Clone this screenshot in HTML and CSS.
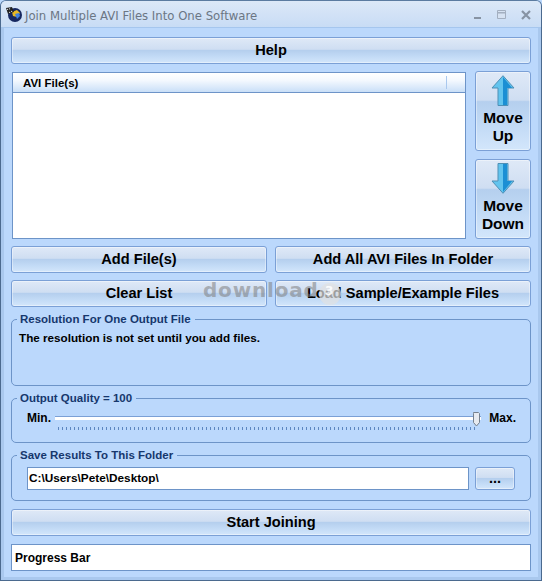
FILE: index.html
```html
<!DOCTYPE html>
<html lang="en">
<head>
    <meta charset="UTF-8">
    <meta name="viewport" content="width=device-width, initial-scale=1.0">
    <title>Join Multiple AVI Files Into One Software</title>
    <link rel="stylesheet" href="styles.css">
</head>
<body>
    <div id="window">
        <div id="titlebar">
            <svg class="app-icon" width="18" height="18" viewBox="0 0 18 18">
                <circle cx="10" cy="10" r="7" fill="#16275f"/>
                <path d="M7 7l5-2 3 3-3 4-4-1z" fill="#e8b923"/>
                <path d="M10 9l4-1 1 3-3 3z" fill="#3f7fe0"/>
                <path d="M1 3l6-1 2 5-6 2z" fill="#222"/>
                <path d="M2 4l1-.2.2 1-1 .2zM4 3.500l1-.2.2 1-1 .2zM4 7l1-.3.3 1-1 .3zM6 6l1-.3.3 1-1 .3z" fill="#eee"/>
            </svg>
            <span class="title-text">Join Multiple AVI Files Into One Software</span>
            <div class="window-controls">
                <svg width="10" height="10" viewBox="0 0 10 10"><path d="M1 7h7v2H1z" fill="#8793a3"/></svg>
                <svg width="10" height="10" viewBox="0 0 10 10"><path d="M.5.5h8v8h-8z" fill="#d6e2f2" stroke="#a3afc0"/><path d="M1 2h7v1.5H1z" fill="#a3afc0"/></svg>
                <svg width="11" height="10" viewBox="0 0 11 10"><path d="M1 1l8 8M9 1L1 9" stroke="#8793a3" stroke-width="2.2" fill="none"/></svg>
            </div>
        </div>

        <div id="content">
            <button class="btn btn-wide">Help</button>

            <div class="list-row">
                <div class="file-list">
                    <div class="list-header"><span>AVI File(s)</span></div>
                </div>
                <div class="move-buttons">
                    <button class="btn btn-move">
                        <svg width="24" height="32" viewBox="0 0 24 32">
                            <path d="M12 .7L23 13h-6v17.500H7V13H1z" fill="#62c4ee" stroke="#4f8fb5"/>
                            <path d="M12 2l9 11h-5v17h-4z" fill="#1b8fd4"/>
                        </svg>
                        <span>Move<br>Up</span>
                    </button>
                    <button class="btn btn-move">
                        <svg width="24" height="32" viewBox="0 0 24 32">
                            <path d="M12 30.300L23 18h-6V.5H7V18H1z" fill="#62c4ee" stroke="#4f8fb5"/>
                            <path d="M12 29l9-11h-5V1h-4z" fill="#1b8fd4"/>
                        </svg>
                        <span>Move<br>Down</span>
                    </button>
                </div>
            </div>

            <div class="button-grid">
                <button class="btn">Add File(s)</button>
                <button class="btn">Add All AVI Files In Folder</button>
                <button class="btn">Clear List</button>
                <button class="btn">Load Sample/Example Files</button>
            </div>

            <fieldset class="group group-resolution">
                <legend>Resolution For One Output File</legend>
                <p class="note">The resolution is not set until you add files.</p>
            </fieldset>

            <fieldset class="group group-quality">
                <legend>Output Quality = 100</legend>
                <div class="slider-row">
                    <span>Min.</span>
                    <div class="slider">
                        <div class="slider-track"></div>
                        <div class="slider-ticks"></div>
                        <svg class="slider-thumb" width="9" height="15" viewBox="0 0 9 15">
                            <path d="M1.5.5h5l1 1v9l-3 3.500-3-3.500v-9z" fill="#e6eaf0" stroke="#75808e"/>
                        </svg>
                    </div>
                    <span>Max.</span>
                </div>
            </fieldset>

            <fieldset class="group group-save">
                <legend>Save Results To This Folder</legend>
                <div class="folder-row">
                    <div class="text-box">C:\Users\Pete\Desktop\</div>
                    <button class="btn btn-browse">...</button>
                </div>
            </fieldset>

            <button class="btn btn-wide btn-start">Start Joining</button>
            <div class="progress-bar">Progress Bar</div>
        </div>

        <div class="watermark">download<span class="watermark-badge">3</span></div>
    </div>
</body>
</html>
```

FILE: styles.css
```css
html, body {
    margin: 0;
    height: 100%;
}
body {
    font-family: "Liberation Sans", Arial, sans-serif;
    background: #bbd8fc;
    overflow: hidden;
}
#window {
    position: relative;
    width: 542px;
    height: 581px;
    box-sizing: border-box;
    background: #bbd8fc;
    border: 1px solid #4b6a8f;
    border-top-color: #5b7ba0;
    border-radius: 6px 6px 0 0;
    box-shadow: inset 3px 0 0 #a9c8ee, inset -3px 0 0 #a9c8ee, inset 0 -3px 0 #a9c8ee;
}
#titlebar {
    display: flex;
    align-items: center;
    height: 26px;
    padding: 0 9px 0 4px;
    background: linear-gradient(#dce8f7, #c8dcf5);
    border-bottom: 1px solid #a5c6ee;
    border-radius: 5px 5px 0 0;
}
.app-icon {
    flex: none;
    margin-right: 2px;
}
.title-text {
    font-family: "DejaVu Sans", sans-serif;
    font-size: 11.7px;
    color: #6b7684;
    padding-top: 3px;
}
.window-controls {
    display: flex;
    gap: 14px;
    margin-left: auto;
    align-items: center;
    padding-top: 2px;
}
#content {
    padding: 9px 10px 0;
}
.btn {
    display: block;
    box-sizing: border-box;
    height: 27px;
    padding: 0 0 2px;
    border: 1px solid #7ba0d6;
    border-radius: 3px;
    background: linear-gradient(#dfe9f7 0%, #cfdef2 45%, #b5cfee 50%, #c3dbf6 75%, #d3e6fb 100%);
    box-shadow: inset 0 0 0 1px rgba(255, 255, 255, 0.4);
    font-family: "Liberation Sans", Arial, sans-serif;
    font-size: 14.6px;
    font-weight: bold;
    color: #000;
}
.btn-wide {
    width: 520px;
}
.list-row {
    display: flex;
    justify-content: space-between;
    margin-top: 7px;
}
.file-list {
    box-sizing: border-box;
    width: 454px;
    height: 167px;
    margin: 1px 0 0 1px;
    background: #fff;
    border: 1px solid #6d94c8;
}
.list-header {
    height: 20px;
    box-sizing: border-box;
    padding: 4px 0 0 10px;
    border-bottom: 1px solid #6d94c8;
    background: linear-gradient(#fff, #f3f8fe 40%, #c9dff8);
    font-size: 11.5px;
    font-weight: bold;
    position: relative;
}
.list-header::after {
    content: "";
    position: absolute;
    right: 18px;
    top: 3px;
    height: 13px;
    border-left: 1px solid #a9c8ee;
}
.move-buttons {
    display: flex;
    flex-direction: column;
    gap: 8px;
}
.btn-move {
    display: flex;
    flex-direction: column;
    align-items: center;
    width: 56px;
    height: 80px;
    padding: 3px 0 0;
    font-size: 15.5px;
    line-height: 18px;
    background: linear-gradient(#dfe9f7 0%, #cfdef2 36%, #b5cfee 38%, #c3dbf6 70%, #d3e6fb 100%);
}
.btn-move span {
    margin-top: 2px;
}
.button-grid {
    display: grid;
    grid-template-columns: 256px 256px;
    gap: 7px 8px;
    margin-top: 7px;
}
.group {
    margin: 0;
    padding: 0 7px;
    border: 1px solid #6d94c8;
    border-radius: 5px;
    min-width: 0;
    box-sizing: border-box;
}
.group legend {
    padding: 0 4px 0 3px;
    margin-left: -2px;
    font-size: 11.5px;
    font-weight: bold;
    color: #16376d;
    line-height: 14px;
}
.group-resolution {
    height: 74px;
    margin-top: 5px;
}
.note {
    margin: 5px 0 0;
    font-size: 11.7px;
    font-weight: bold;
    color: #000;
}
.group-quality {
    height: 52px;
    margin-top: 5px;
}
.slider-row {
    display: flex;
    align-items: flex-start;
    font-size: 12px;
    font-weight: bold;
    padding: 6px 7px 0 8px;
}
.slider {
    position: relative;
    flex: 1;
    height: 22px;
    margin: 1px 8px 0 4px;
}
.slider-track {
    height: 3px;
    margin-top: 4px;
    background: #fff;
    border-top: 1px solid #7ba0d6;
}
.slider-ticks {
    height: 3px;
    margin: 7px 4px 0 3px;
    background: repeating-linear-gradient(90deg, #5c86c0 0 1px, transparent 1px 4px);
}
.slider-thumb {
    position: absolute;
    right: 0;
    top: 0;
}
.group-save {
    height: 53px;
    margin-top: 5px;
}
.folder-row {
    display: flex;
    gap: 6px;
    padding: 0 8px;
    margin-top: 5px;
}
.text-box {
    box-sizing: border-box;
    width: 442px;
    height: 23px;
    padding: 3px 1px;
    background: #fff;
    border: 1px solid #6d94c8;
    font-size: 11.8px;
    font-weight: bold;
}
.btn-browse {
    width: 40px;
    height: 23px;
}
.btn-start {
    margin-top: 8px;
}
.progress-bar {
    box-sizing: border-box;
    width: 520px;
    height: 27px;
    margin-top: 8px;
    padding: 6px 3px;
    background: #fff;
    border: 1px solid #6d94c8;
    font-size: 12px;
    font-weight: bold;
}
.watermark {
    position: absolute;
    left: 202px;
    top: 277px;
    font-family: "DejaVu Sans", sans-serif;
    font-size: 20px;
    font-weight: bold;
    letter-spacing: 0.8px;
    color: rgba(125, 125, 125, 0.55);
    pointer-events: none;
}
.watermark-badge {
    display: inline-block;
    width: 22px;
    height: 22px;
    border-radius: 50%;
    background: rgba(225, 225, 225, 0.7);
    color: rgba(255, 255, 255, 0.9);
    font-size: 12px;
    text-align: center;
    line-height: 16px;
    vertical-align: 2px;
}
```
